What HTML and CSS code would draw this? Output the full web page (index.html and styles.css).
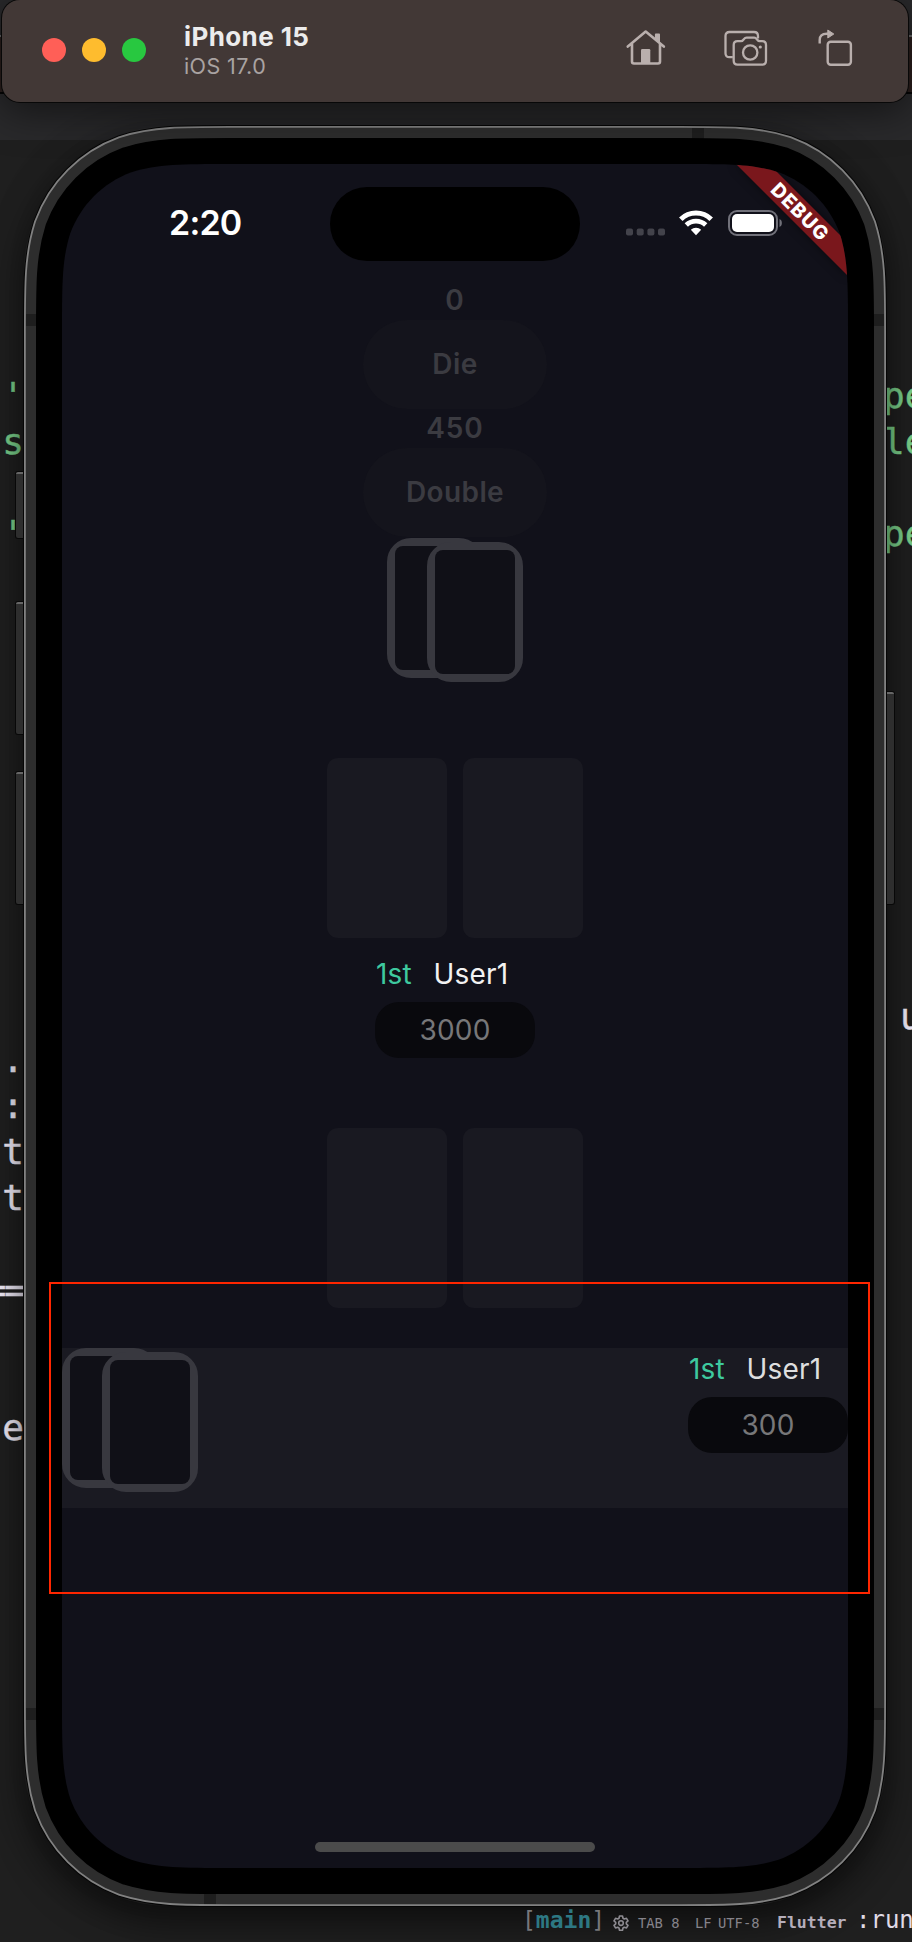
FILE: index.html
```
<!DOCTYPE html>
<html lang="en">
<head>
<meta charset="utf-8">
<title>iPhone 15 Simulator</title>
<link rel="stylesheet" href="styles.css">
</head>
<body>
<main class="desktop">
  <section class="editor">
    <div class="editor-title"></div>
    <div class="editor-tabs"></div>
    <pre class="code code-left-top green">'
s

'</pre>
    <pre class="code code-right-top green">pe
le

pe</pre>
    <pre class="code code-left-low">{.
:
t
t

<span class="equals">==</span>


e</pre>
    <pre class="code code-right-low">u</pre>
  </section>

  <section class="phone">
    <i class="side-button action"></i>
    <i class="side-button volume-up"></i>
    <i class="side-button volume-down"></i>
    <i class="side-button power"></i>
    <svg class="frame" width="862" height="1780" viewBox="-38 -38 862 1780">
      <defs>
        <path id="body-shape" d="M168.2 0H617.8c48.5 0 72.7 0 98.7 8.2 28.5 10.4 50.9 32.8 61.3 61.3 8.2 26 8.2 50.2 8.2 98.7V1535.8c0 48.5 0 72.7-8.2 98.7-10.4 28.5-32.8 50.9-61.3 61.3-26 8.2-50.2 8.2-98.7 8.2H168.2c-48.5 0-72.7 0-98.7-8.2-28.5-10.4-50.9-32.8-61.3-61.3C0 1608.500 0 1584.300 0 1535.800V168.200c0-48.500 0-72.700 8.200-98.700 10.400-28.500 32.800-50.900 61.300-61.300C95.500 0 119.700 0 168.200 0z"/>
      </defs>
      <use href="#body-shape" fill="none" stroke="#050505" stroke-width="78"/>
      <use href="#body-shape" fill="none" stroke="#818181" stroke-width="76"/>
      <use href="#body-shape" fill="none" stroke="#2d2d2d" stroke-width="72.400"/>
      <path fill="#1e1e1e" d="M630-36h12v12h-12zM142 1728h12v12h-12zM-36 150h12v12h-12zM810 150h12v12h-12zM-36 1544h12v12h-12zM810 1544h12v12h-12z"/>
      <use href="#body-shape" fill="#000" stroke="#000" stroke-width="52"/>
    </svg>

    <div class="screen">
      <header class="status">
        <span class="time">2:20</span>
        <span class="island"></span>
        <svg class="signal" width="40" height="8" viewBox="0 0 40 8" fill="#43434b"><rect y=".5" width="7" height="7" rx="2"/><rect x="10.700" y=".5" width="7" height="7" rx="2"/><rect x="21.400" y=".5" width="7" height="7" rx="2"/><rect x="32" y=".5" width="7" height="7" rx="2"/></svg>
        <svg class="wifi" width="34" height="26" viewBox="0 0 34 26" fill="none" stroke="#fff"><path stroke-width="5" d="M1.800 9.200a21.700 21.700 0 0 1 30.400 0"/><path stroke-width="4.800" d="M7.300 15a14 14 0 0 1 19.400 0"/><path fill="#fff" stroke="none" d="M17 25.200l-5.200-5.400a7.800 7.800 0 0 1 10.400 0z"/></svg>
        <svg class="battery" width="56" height="26" viewBox="0 0 56 26"><rect x="1" y="1" width="48" height="24" rx="8" fill="none" stroke="#71717a" stroke-width="2"/><rect x="4" y="4" width="42" height="18" rx="5" fill="#fff"/><path fill="#71717a" d="M51.500 9c3.200 1.300 3.200 6.700 0 8z"/></svg>
      </header>

      <div class="actions">
        <span class="amount">0</span>
        <div class="action-pill">Die</div>
        <span class="amount">450</span>
        <div class="action-pill">Double</div>
      </div>
      <div class="deck deck-center"><i class="card"></i><i class="card card-front"></i></div>

      <div class="slots"><i class="slot"></i><i class="slot"></i></div>
      <div class="player player-center">
        <div class="name-row"><span class="rank">1st</span><span>User1</span></div>
        <div class="chips">3000</div>
      </div>
      <div class="slots slots-second"><i class="slot"></i><i class="slot"></i></div>

      <div class="my-row">
        <div class="deck"><i class="card"></i><i class="card card-front"></i></div>
        <div class="player player-own">
          <div class="name-row"><span class="rank">1st</span><span>User1</span></div>
          <div class="chips">300</div>
        </div>
      </div>
      <i class="home-indicator"></i>

      <svg class="debug" width="140" height="140" viewBox="646 0 140 140">
        <path class="debug-band" d="M674 0h33l79 79v33z"/>
        <text class="debug-label" transform="translate(738.200 47.800) rotate(45)" y="7" text-anchor="middle">DEBUG</text>
      </svg>
    </div>
  </section>

  <div class="highlight"></div>

  <header class="toolbar">
    <div class="lights"><i class="light red"></i><i class="light yellow"></i><i class="light lime"></i></div>
    <div class="device"><strong>iPhone 15</strong><span>iOS 17.0</span></div>
    <nav class="tools">
      <svg width="40" height="38" viewBox="0 0 40 38" fill="none" stroke="#b9afad" stroke-width="2.600" stroke-linecap="round" stroke-linejoin="round"><path d="M1.800 17.600L19.700 2.600 37.800 17.600M6 15v17.500q0 2 2 2h24q2 0 2-2V15"/><path d="M29.800 10V5.500h3.300V13" stroke-width="1.800" fill="#b9afad"/><path d="M15 34.500V21.200q0-1.200 1.200-1.200h6.900q1.200 0 1.200 1.200v13.300z" fill="#b9afad" stroke="none"/></svg>
      <svg width="44" height="38" viewBox="0 0 44 38" fill="none" stroke="#b9afad" stroke-width="2.300" stroke-linejoin="round"><path d="M8.800 28.200H5.500q-4 0-4-4V7q0-4 4-4H30q4 0 4 4v2.500"/><path d="M9.700 16q0-3.800 3.800-3.800H17c2.500 0 2.800-3.600 5.500-3.600h7.700c2.700 0 3 3.600 5.500 3.600h2.500q3.800 0 3.800 3.800v15.800q0 3.800-3.800 3.800H13.500q-3.800 0-3.800-3.800z"/><circle cx="26.200" cy="23.500" r="7.200"/><circle cx="36.300" cy="18" r="1.600" fill="#b9afad" stroke="none"/></svg>
      <svg width="36" height="38" viewBox="0 0 36 38" fill="none" stroke="#b9afad" stroke-width="2.400"><rect x="9.700" y="13.700" width="23.200" height="23" rx="3"/><path d="M1.700 15.500V12q0-6.300 7-6.300h2"/><path fill="#b9afad" stroke="#b9afad" stroke-width="1" stroke-linejoin="round" d="M9.800 2v8l6-4z"/></svg>
    </nav>
  </header>

  <footer class="statusline">
    <span class="branch">[<b>main</b>]</span>
    <svg class="gear" width="16" height="16" viewBox="0 0 16 16" fill="none" stroke="#8d8b91" stroke-width="1.600" stroke-linejoin="round"><path d="M6.500 1h3l.5 2.200 1.300.8 2.200-.7 1.500 2.600-1.700 1.500v1.400l1.700 1.500-1.500 2.600-2.200-.7-1.300.8-.5 2.200h-3L6 13l-1.300-.8-2.200.7L1 10.300l1.700-1.500V7.400L1 5.900l1.500-2.600 2.200.7L6 3.200z"/><circle cx="8" cy="8.100" r="2.300"/></svg>
    <span class="meta tab">TAB 8</span>
    <span class="meta lf">LF</span>
    <span class="meta utf">UTF-8</span>
    <span class="flutter">Flutter</span>
    <span class="command">:run</span>
  </footer>
</main>
</body>
</html>
```

FILE: styles.css
```
* { box-sizing: border-box; }

body {
  margin: 0;
  background: #1e1e1e;
  font-family: Inter, "Liberation Sans", sans-serif;
}

i { display: block; }

.desktop {
  position: relative;
  width: 912px;
  height: 1942px;
  overflow: hidden;
  background: #1f1f1f;
}

/* Editor window behind the simulator */
.editor { position: absolute; inset: 0; }

.editor-title {
  height: 96px;
  background: linear-gradient(#29292b 0 35px, #666 35px 37px, #2b1f1d 37px 92px, #050505 92px 94px, #29292b 94px);
}

.editor-tabs { height: 44px; background: #29292b; }

.code {
  position: absolute;
  margin: 0;
  color: #f0ebf8;
  font: 36px/46px "DejaVu Sans Mono", monospace;
  -webkit-text-stroke: .4px;
}

.green { color: #79cf8a; }
.code-left-top { right: 888px; top: 373px; text-align: right; }
.code-right-top { left: 883px; top: 373px; }
.code-left-low { right: 888px; top: 1037px; text-align: right; }
.code-right-low { left: 900px; top: 994px; }
.equals { letter-spacing: -2px; }

/* Simulated phone */
.phone {
  position: absolute;
  left: 24px;
  top: 126px;
  width: 862px;
  height: 1780px;
  padding: 38px;
  border-radius: 146px;
  box-shadow: 0 14px 32px 2px rgba(0, 0, 0, .5), 0 0 40px rgba(0, 0, 0, .15);
}

.frame { position: absolute; left: 0; top: 0; overflow: visible; }

.side-button {
  position: absolute;
  left: -8px;
  width: 10px;
  border-top: 2px solid #666;
  border-radius: 2px;
  background: #2e2e2e;
  box-shadow: 0 0 0 1px #080808;
}

.action { top: 346px; height: 66px; }
.volume-up { top: 476px; height: 132px; }
.volume-down { top: 646px; height: 132px; }
.power { left: 860px; top: 566px; height: 212px; }

.screen {
  position: relative;
  display: flex;
  flex-direction: column;
  align-items: center;
  width: 786px;
  height: 1704px;
  background: #11111a;
  clip-path: path("M168.2 0H617.8c48.5 0 72.7 0 98.7 8.2 28.5 10.4 50.9 32.8 61.3 61.3 8.2 26 8.2 50.2 8.2 98.7V1535.8c0 48.5 0 72.7-8.2 98.7-10.4 28.5-32.8 50.9-61.3 61.3-26 8.2-50.2 8.2-98.7 8.2H168.2c-48.5 0-72.7 0-98.7-8.2-28.5-10.4-50.9-32.8-61.3-61.3C0 1608.5 0 1584.3 0 1535.8V168.2c0-48.5 0-72.7 8.2-98.7 10.4-28.5 32.8-50.9 61.3-61.3C95.5 0 119.7 0 168.2 0z");
}

.status {
  display: flex;
  align-items: flex-start;
  width: 100%;
  height: 117px;
  padding: 22.5px 0 0 107px;
}

.time {
  width: 161px;
  margin-top: 14.5px;
  color: #fff;
  font-size: 34px;
  font-weight: 600;
  line-height: 44px;
  letter-spacing: -.8px;
}

.island { width: 250px; height: 74px; border-radius: 37px; background: #000; }
.signal { margin: 41px 0 0 46px; }
.wifi { margin: 23px 0 0 13px; }
.battery { margin: 23px 0 0 15px; }

.actions {
  display: flex;
  flex-direction: column;
  align-items: center;
  color: #3b3b41;
  font-size: 28px;
  font-weight: 600;
  letter-spacing: .4px;
}

.amount { height: 39px; line-height: 39px; letter-spacing: .9px; }

.action-pill {
  width: 184px;
  height: 89px;
  border-radius: 44px;
  background: #14141c;
  line-height: 89px;
  text-align: center;
}

.deck { display: flex; width: 136px; height: 144px; }
.deck-center { margin-top: 1px; }

.card {
  flex: none;
  width: 96px;
  height: 140px;
  border: 8px solid #38383f;
  border-radius: 24px;
  background: #38383f;
}

.card::before {
  content: "";
  display: block;
  height: 124px;
  border-radius: 8px;
  background: #101017;
}

.card-front { margin: 4px 0 0 -56px; }

.slots { display: flex; gap: 16px; margin-top: 76px; }
.slot { width: 120px; height: 180px; border-radius: 11px; background: #191921; }
.slots-second { margin-top: 70px; }

.player { width: 160px; font-size: 28px; letter-spacing: .2px; }
.player-center { margin-top: 15px; }

.name-row {
  display: flex;
  gap: 21.5px;
  height: 49px;
  padding-left: 1px;
  color: #f2f2f2;
  line-height: 43.5px;
}

.rank { color: #3ec99f; }

.chips {
  height: 56px;
  border-radius: 24px;
  background: #09090d;
  color: #777779;
  line-height: 56px;
  text-align: center;
}

.my-row {
  display: flex;
  justify-content: space-between;
  width: 100%;
  height: 160px;
  margin-top: 40px;
  background: #1a1a22;
}

.player-own .name-row { color: #dededf; }

.home-indicator {
  width: 280px;
  height: 10px;
  margin: auto 0 16px;
  border-radius: 5px;
  background: #4b4b4b;
}

.debug { position: absolute; right: 0; top: 0; }
.debug-band { fill: #7a171c; filter: drop-shadow(0 0 5px rgba(0, 0, 0, .5)); }
.debug-label { fill: #fff; font-size: 19.5px; font-weight: 800; letter-spacing: 1px; }

/* Annotation rectangle */
.highlight {
  position: absolute;
  left: 49px;
  top: 1282px;
  width: 821px;
  height: 312px;
  border: 2px solid #ff2600;
}

/* Simulator window bar */
.toolbar {
  position: absolute;
  left: 2px;
  top: 0;
  display: flex;
  align-items: flex-start;
  width: 906px;
  height: 102px;
  padding-left: 40px;
  border-radius: 18px;
  background: #423836;
  box-shadow: 0 0 0 1px #080808, 0 8px 40px rgba(0, 0, 0, .55);
}

.lights { display: flex; gap: 16px; margin-top: 38px; }
.light { width: 24px; height: 24px; border-radius: 50%; }
.red { background: #ff5f57; }
.yellow { background: #febc2e; }
.lime { background: #28c840; }

.device { display: flex; flex-direction: column; width: 442px; margin: 21px 0 0 38px; }
.device strong { color: #ececec; font-size: 26px; line-height: 31px; letter-spacing: .4px; }
.device span { color: #a9a3a2; font-size: 21.5px; line-height: 28px; letter-spacing: .4px; }

.tools { display: flex; margin-top: 29px; gap: 58px; }
.tools svg:last-child { margin: -1px 0 0 -8px; }

/* Editor status line */
.statusline {
  position: absolute;
  left: 522px;
  top: 1905px;
  display: flex;
  align-items: baseline;
  width: 390px;
  height: 37px;
  overflow: hidden;
  font-family: "DejaVu Sans Mono", monospace;
  line-height: 30px;
  white-space: pre;
}

.branch { width: 91px; color: #77777a; font-size: 23px; }
.branch b { color: #2d7883; }
.gear { align-self: flex-start; width: 16px; margin: 10px 9px 0 0; flex: none; }
.gear + .meta { width: 57px; }
.branch, .meta, .flutter, .command { flex: none; }
.meta { color: #85838a; font-size: 13.8px; }
.lf { width: 23px; }
.utf { width: 59px; }
.flutter { width: 79px; color: #b5aebb; font-size: 16.5px; font-weight: 700; }
.command { color: #e0dbe6; font-size: 24px; }
```
